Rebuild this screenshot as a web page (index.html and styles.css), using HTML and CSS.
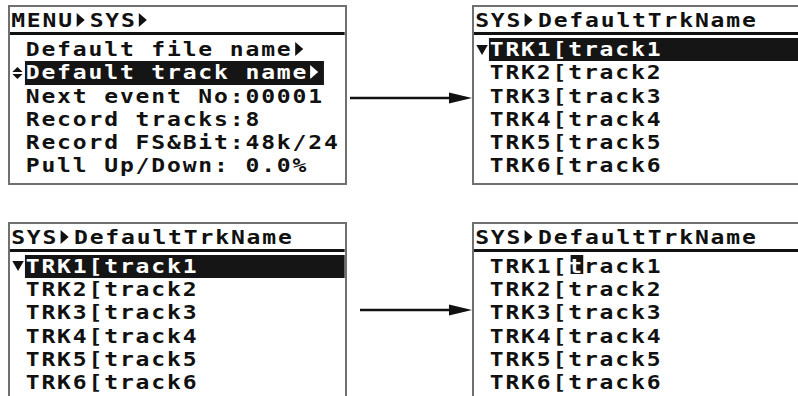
FILE: index.html
```html
<!DOCTYPE html>
<html lang="en">
<head>
  <meta charset="UTF-8" />
  <title>Default track name</title>
  <link rel="stylesheet" href="styles.css">
</head>
<body>
  <div class="sheet">

    <div class="row">
      <section class="lcd">
        <div class="scr">
          <div class="lcd-title">MENU<i class="tri"></i>SYS<i class="tri"></i></div>
          <div class="lcd-list">
            <div class="ln"><span class="mk"></span><span>Default file name<i class="tri"></i></span></div>
            <div class="ln"><span class="mk">
              <svg class="updown" viewBox="0 0 10 14" width="9" height="14" preserveAspectRatio="none"><path d="M0 6 L5 1 L10 6 Z M0 8 L10 8 L5 13 Z" fill="#111"/></svg>
            </span><span class="hl">Default track name<i class="tri"></i></span></div>
            <div class="ln"><span class="mk"></span><span>Next event No:00001</span></div>
            <div class="ln"><span class="mk"></span><span>Record tracks:8</span></div>
            <div class="ln"><span class="mk"></span><span>Record FS&amp;Bit:48k/24</span></div>
            <div class="ln"><span class="mk"></span><span>Pull Up/Down: 0.0%</span></div>
          </div>
        </div>
      </section>
      <div class="arrow">
        <svg viewBox="0 0 125 12" width="125" height="12"><line x1="3" y1="6" x2="104" y2="6" stroke="#111" stroke-width="2.4"/><path d="M102 0.5 L125 6 L102 11.5 Z" fill="#111"/></svg>
      </div>
      <section class="lcd lcd-open">
        <div class="scr">
          <div class="lcd-title">SYS<i class="tri"></i>DefaultTrkName</div>
          <div class="lcd-list">
            <div class="ln"><span class="mk"><i class="down"></i></span><span class="hl hl-full">TRK1[track1</span></div>
            <div class="ln"><span class="mk"></span><span>TRK2[track2</span></div>
            <div class="ln"><span class="mk"></span><span>TRK3[track3</span></div>
            <div class="ln"><span class="mk"></span><span>TRK4[track4</span></div>
            <div class="ln"><span class="mk"></span><span>TRK5[track5</span></div>
            <div class="ln"><span class="mk"></span><span>TRK6[track6</span></div>
          </div>
        </div>
      </section>
    </div>

    <div class="row">
      <section class="lcd">
        <div class="scr">
          <div class="lcd-title">SYS<i class="tri"></i>DefaultTrkName</div>
          <div class="lcd-list">
            <div class="ln"><span class="mk"><i class="down"></i></span><span class="hl hl-full">TRK1[track1</span></div>
            <div class="ln"><span class="mk"></span><span>TRK2[track2</span></div>
            <div class="ln"><span class="mk"></span><span>TRK3[track3</span></div>
            <div class="ln"><span class="mk"></span><span>TRK4[track4</span></div>
            <div class="ln"><span class="mk"></span><span>TRK5[track5</span></div>
            <div class="ln"><span class="mk"></span><span>TRK6[track6</span></div>
          </div>
        </div>
      </section>
      <div class="arrow arrow-low">
        <svg viewBox="0 0 125 12" width="125" height="12"><line x1="13" y1="6" x2="104" y2="6" stroke="#111" stroke-width="2.4"/><path d="M102 0.5 L125 6 L102 11.5 Z" fill="#111"/></svg>
      </div>
      <section class="lcd lcd-open">
        <div class="scr">
          <div class="lcd-title">SYS<i class="tri"></i>DefaultTrkName</div>
          <div class="lcd-list">
            <div class="ln"><span class="mk"></span><span>TRK1[<span class="cur">t</span>rack1</span></div>
            <div class="ln"><span class="mk"></span><span>TRK2[track2</span></div>
            <div class="ln"><span class="mk"></span><span>TRK3[track3</span></div>
            <div class="ln"><span class="mk"></span><span>TRK4[track4</span></div>
            <div class="ln"><span class="mk"></span><span>TRK5[track5</span></div>
            <div class="ln"><span class="mk"></span><span>TRK6[track6</span></div>
          </div>
        </div>
      </section>
    </div>

  </div>
</body>
</html>
```

FILE: styles.css
```css
* {
  box-sizing: border-box;
}
html, body {
  margin: 0;
}
body {
  width: 798px;
  height: 396px;
  overflow: hidden;
  background: #fff;
  color: #111;
  font-family: "DejaVu Sans Mono", "Liberation Mono", monospace;
  font-weight: bold;
  font-size: 20px;
}
.sheet {
  display: flex;
  flex-direction: column;
  gap: 37px;
  padding: 5px 0 0 8px;
}
.row {
  display: grid;
  grid-template-columns: 339px 125px 1fr;
  align-items: start;
}

/* LCD panels: the dot-matrix font is wider than it is tall,
   so the screen content is stretched sideways */
.lcd {
  border: 2px solid #707070;
  padding-bottom: 5px;
}
.lcd-open {
  border-right: none;
}
.scr {
  width: calc(100% / 1.15);
  transform: scaleX(1.15);
  transform-origin: 0 0;
  line-height: 23.3px;
  letter-spacing: 1.61px;
  white-space: nowrap;
}
.lcd-title {
  padding: 2px 0 0 1px;
  height: 28.3px;
  border-bottom: 3px solid #111;
}
.lcd-list {
  padding-top: 2.7px;
}
.ln {
  display: flex;
  height: 23.3px;
}
.mk {
  flex: none;
  width: 13.65px;
  display: flex;
  align-items: center;
  justify-content: center;
}
.hl {
  background: #151515;
  color: #fff;
  padding-left: 1px;
  margin-left: -1px;
}
.hl-full {
  flex: 1;
}
.cur {
  color: #fff;
  background: linear-gradient(#151515, #151515) no-repeat;
  background-position: 2.5px 1px;
  background-size: 11px 19px;
}

/* glyph shapes */
.tri {
  display: inline-block;
  width: 0;
  height: 0;
  border-left: 7px solid currentColor;
  border-top: 7px solid transparent;
  border-bottom: 7px solid transparent;
  margin: 0 4.65px 0 2px;
  vertical-align: 0;
}
.down {
  display: block;
  width: 0;
  height: 0;
  border-top: 10px solid #111;
  border-left: 5.2px solid transparent;
  border-right: 5.2px solid transparent;
}
.updown {
  display: block;
}

/* arrows between screens */
.arrow {
  padding-top: 87px;
}
.arrow svg {
  display: block;
}
.arrow-low {
  padding-top: 82px;
}
```
